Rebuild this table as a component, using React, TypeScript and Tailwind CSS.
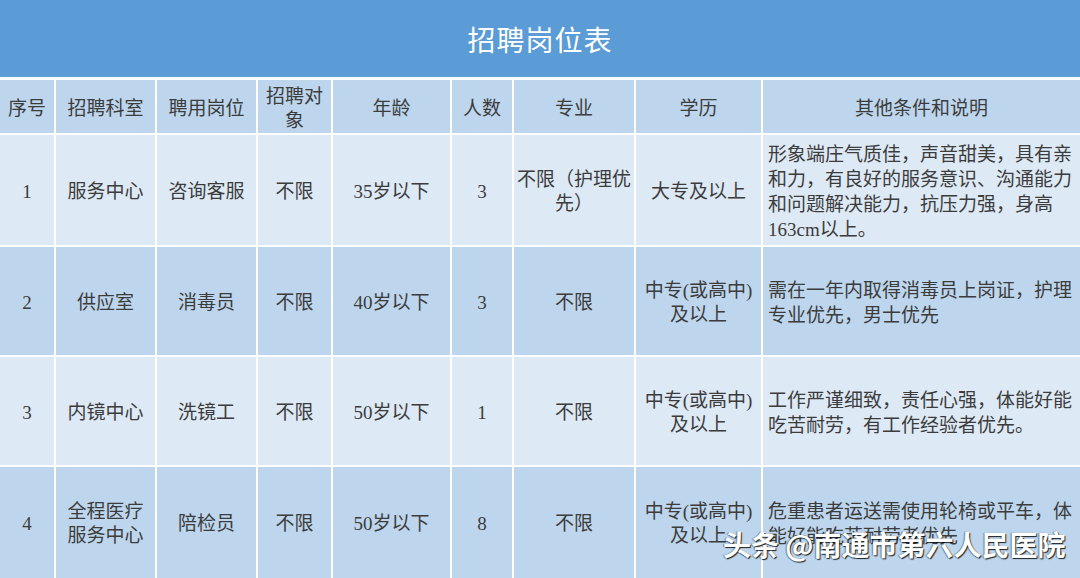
const font = { fontFamily: '"Liberation Serif", "Noto Sans CJK SC", serif' }

type Row = {
  no: string
  dept: string[]
  post: string
  target: string
  age: string
  count: string
  major: string[]
  edu: string[]
  notes: string[]
  bg: string
}

const rows: Row[] = [
  {
    no: '1',
    dept: ['服务中心'],
    post: '咨询客服',
    target: '不限',
    age: '35岁以下',
    count: '3',
    major: ['不限（护理优', '先）'],
    edu: ['大专及以上'],
    notes: [
      '形象端庄气质佳，声音甜美，具有亲',
      '和力，有良好的服务意识、沟通能力',
      '和问题解决能力，抗压力强，身高',
      '163cm以上。',
    ],
    bg: 'bg-[#dde9f5]',
  },
  {
    no: '2',
    dept: ['供应室'],
    post: '消毒员',
    target: '不限',
    age: '40岁以下',
    count: '3',
    major: ['不限'],
    edu: ['中专(或高中)', '及以上'],
    notes: ['需在一年内取得消毒员上岗证，护理', '专业优先，男士优先'],
    bg: 'bg-[#bdd6ed]',
  },
  {
    no: '3',
    dept: ['内镜中心'],
    post: '洗镜工',
    target: '不限',
    age: '50岁以下',
    count: '1',
    major: ['不限'],
    edu: ['中专(或高中)', '及以上'],
    notes: ['工作严谨细致，责任心强，体能好能', '吃苦耐劳，有工作经验者优先。'],
    bg: 'bg-[#dde9f5]',
  },
  {
    no: '4',
    dept: ['全程医疗', '服务中心'],
    post: '陪检员',
    target: '不限',
    age: '50岁以下',
    count: '8',
    major: ['不限'],
    edu: ['中专(或高中)', '及以上'],
    notes: ['危重患者运送需使用轮椅或平车，体', '能好能吃苦耐劳者优先'],
    bg: 'bg-[#bdd6ed]',
  },
]

const headers: string[][] = [
  ['序号'],
  ['招聘科室'],
  ['聘用岗位'],
  ['招聘对', '象'],
  ['年龄'],
  ['人数'],
  ['专业'],
  ['学历'],
  ['其他条件和说明'],
]

function Cell({
  lines,
  bg,
  left,
  head,
}: {
  lines: string[]
  bg: string
  left?: boolean
  head?: boolean
}) {
  return (
    <div
      className={`${bg} flex flex-col justify-center ${head ? 'pt-[5px]' : 'pt-[3px]'} ${left ? 'items-start pl-[5px] leading-[25px]' : 'items-center text-center leading-[24px]'} text-[19px] text-[#3c3c3c]`}
    >
      {lines.map((l, i) => (
        <span key={i} className="whitespace-nowrap">
          {l}
        </span>
      ))}
    </div>
  )
}

export default function App() {
  return (
    <div className="relative w-[1080px] h-[578px] overflow-hidden bg-white" style={font}>
      {/* Title */}
      <div className="h-[77px] bg-[#5b9bd6] flex items-center justify-center pt-[7px]">
        <span className="text-[28px] text-white tracking-[1px]">招聘岗位表</span>
      </div>

      {/* Table */}
      <div className="mt-[3px] grid grid-cols-[54px_99px_99px_73px_117px_60px_120px_125px_317px] grid-rows-[53px_110px_108px_108px_111px] gap-[2px] bg-white">
        {headers.map((h, i) => (
          <Cell key={i} lines={h} bg="bg-[#bdd6ed]" head />
        ))}
        {rows.map((r) => (
          <div key={r.no} className="contents">
            <Cell lines={[r.no]} bg={r.bg} />
            <Cell lines={r.dept} bg={r.bg} />
            <Cell lines={[r.post]} bg={r.bg} />
            <Cell lines={[r.target]} bg={r.bg} />
            <Cell lines={[r.age]} bg={r.bg} />
            <Cell lines={[r.count]} bg={r.bg} />
            <Cell lines={r.major} bg={r.bg} />
            <Cell lines={r.edu} bg={r.bg} />
            <Cell lines={r.notes} bg={r.bg} left />
          </div>
        ))}
      </div>

      {/* Watermark */}
      <div
        className="absolute left-[723px] top-[526px] text-[28px] leading-[36px] font-bold text-white whitespace-nowrap [text-shadow:1px_1px_1px_rgba(0,0,0,0.85),-1px_0_1px_rgba(0,0,0,0.4)]"
        style={{ fontFamily: '"Noto Sans CJK SC", sans-serif' }}
      >
        头条 @南通市第六人民医院
      </div>
    </div>
  )
}
